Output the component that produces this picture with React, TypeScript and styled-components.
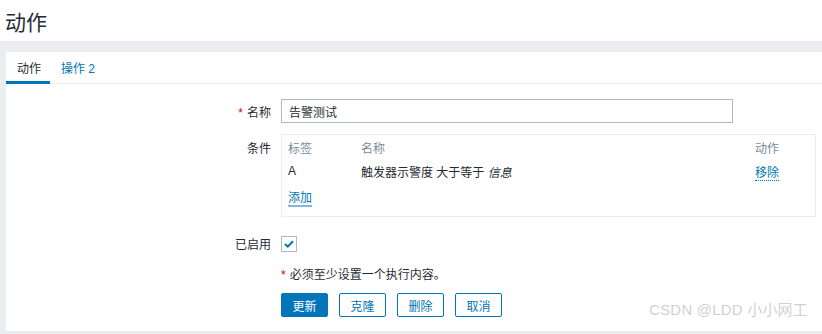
import React, { useState } from 'react';
import styled, { createGlobalStyle } from 'styled-components';

const colors = {
  text: '#1f2c33',
  muted: '#768d99',
  blue: '#0275b8',
  red: '#d40000',
  page: '#ebeef0',
  border: '#acbbc2',
  light: '#ebeef0',
};

const GlobalStyle = createGlobalStyle`
  html, body {
    margin: 0;
    padding: 0;
    background: #ffffff;
  }
  body {
    font-family: Arial, "Liberation Sans", "Noto Sans CJK SC", sans-serif;
    font-size: 12px;
    color: ${colors.text};
  }
  #root {
    height: 334px;
    overflow: hidden;
  }
`;

// Cabeçalho com o título da página
const Header = styled.header`
  height: 41px;
  padding-left: 5px;
  display: flex;
  align-items: center;
  background: #ffffff;
`;

const Title = styled.h1`
  margin: 0;
  font-size: 21px;
  font-weight: normal;
  color: ${colors.text};
`;

const Main = styled.main`
  background: ${colors.page};
  padding: 11px 0 3px 6px;
  position: relative;
`;

const Panel = styled.section`
  background: #ffffff;
  height: 279px;
  display: flex;
  flex-direction: column;
`;

const TabList = styled.nav`
  display: flex;
  height: 31px;
  border-bottom: 1px solid ${colors.light};
`;

const Tab = styled.a<{ $active?: boolean }>`
  display: flex;
  align-items: center;
  padding: 2px 9px 0 11px;
  margin-bottom: -1px;
  color: ${(p) => (p.$active ? colors.text : colors.blue)};
  border-bottom: 3px solid ${(p) => (p.$active ? colors.blue : 'transparent')};
  cursor: pointer;
`;

const Form = styled.div`
  padding-top: 15px;
  display: flex;
  flex-direction: column;
`;

const Row = styled.div<{ $gap?: number; $top?: boolean }>`
  display: grid;
  grid-template-columns: 265px 1fr;
  column-gap: 10px;
  align-items: ${(p) => (p.$top ? 'start' : 'center')};
  margin-bottom: ${(p) => p.$gap ?? 0}px;
  padding-right: 6px;
`;

const Label = styled.label<{ $pad?: number }>`
  text-align: right;
  padding-top: ${(p) => p.$pad ?? 0}px;
  color: ${colors.text};
`;

const Asterisk = styled.span`
  color: ${colors.red};
  margin-right: 4px;
`;

const TextInput = styled.input`
  box-sizing: border-box;
  width: 452px;
  height: 24px;
  padding: 0 7px;
  border: 1px solid ${colors.border};
  font-family: inherit;
  font-size: 12px;
  color: ${colors.text};
  outline: none;
  border-radius: 0;
`;

const ConditionBox = styled.div`
  border: 1px solid ${colors.light};
  padding: 0 6px 5px;
`;

const Table = styled.table`
  width: 100%;
  border-collapse: collapse;
`;

const Th = styled.th<{ $w?: number }>`
  text-align: left;
  font-weight: normal;
  color: ${colors.muted};
  height: 24px;
  padding: 0;
  width: ${(p) => (p.$w ? `${p.$w}px` : 'auto')};
`;

const Td = styled.td`
  height: 24px;
  padding: 0;
  color: ${colors.text};
`;

const RemoveLink = styled.a`
  color: ${colors.blue};
  border-bottom: 1px dotted ${colors.blue};
  cursor: pointer;
`;

const AddRow = styled.div`
  height: 24px;
  margin-top: 4px;
  display: flex;
  align-items: center;
`;

const AddLink = styled.a`
  color: ${colors.blue};
  border-bottom: 2px solid #82b9d9;
  line-height: 13px;
  cursor: pointer;
`;

const CheckBox = styled.span`
  box-sizing: border-box;
  width: 16px;
  height: 16px;
  border: 1px solid ${colors.border};
  display: flex;
  align-items: center;
  justify-content: center;
  background: #ffffff;
  cursor: pointer;
`;

const Note = styled.div`
  grid-column: 2;
  color: ${colors.text};
`;

const Buttons = styled.div`
  grid-column: 2;
  display: flex;
  gap: 11px;
`;

const Button = styled.button<{ $primary?: boolean }>`
  box-sizing: border-box;
  width: 47px;
  height: 24px;
  padding: 0;
  border-radius: 2px;
  border: 1px solid ${colors.blue};
  background: ${(p) => (p.$primary ? colors.blue : '#ffffff')};
  color: ${(p) => (p.$primary ? '#ffffff' : colors.blue)};
  font-family: inherit;
  font-size: 12px;
  cursor: pointer;
`;

const Watermark = styled.div`
  position: absolute;
  right: 14px;
  bottom: 15px;
  font-size: 15px;
  color: rgba(160, 160, 160, 0.5);
  letter-spacing: 0.2px;
  pointer-events: none;
`;

const App: React.FC = () => {
  const [name, setName] = useState<string>('告警测试');
  const [enabled, setEnabled] = useState<boolean>(true);

  return (
    <>
      <GlobalStyle />
      <Header>
        <Title>动作</Title>
      </Header>
      <Main>
        <Panel>
          <TabList>
            <Tab $active>动作</Tab>
            <Tab>操作 2</Tab>
          </TabList>
          <Form>
            <Row $gap={11}>
              <Label>
                <Asterisk>*</Asterisk>名称
              </Label>
              <TextInput value={name} onChange={(e) => setName(e.target.value)} />
            </Row>
            <Row $gap={18} $top>
              <Label $pad={5}>条件</Label>
              <ConditionBox>
                <Table>
                  <thead>
                    <tr>
                      <Th $w={73}>标签</Th>
                      <Th>名称</Th>
                      <Th $w={54}>动作</Th>
                    </tr>
                  </thead>
                  <tbody>
                    <tr>
                      <Td>A</Td>
                      <Td>
                        触发器示警度 大于等于 <i>信息</i>
                      </Td>
                      <Td>
                        <RemoveLink>移除</RemoveLink>
                      </Td>
                    </tr>
                  </tbody>
                </Table>
                <AddRow>
                  <AddLink>添加</AddLink>
                </AddRow>
              </ConditionBox>
            </Row>
            <Row $gap={13}>
              <Label>已启用</Label>
              <CheckBox onClick={() => setEnabled(!enabled)}>
                {enabled && (
                  <svg width="10" height="8" viewBox="0 0 10 8">
                    <path d="M1 4 L3.8 6.6 L9 1.2" fill="none" stroke={colors.blue} strokeWidth="2" />
                  </svg>
                )}
              </CheckBox>
            </Row>
            <Row $gap={11}>
              <Note>
                <Asterisk>*</Asterisk>必须至少设置一个执行内容。
              </Note>
            </Row>
            <Row>
              <Buttons>
                <Button $primary>更新</Button>
                <Button>克隆</Button>
                <Button>删除</Button>
                <Button>取消</Button>
              </Buttons>
            </Row>
          </Form>
        </Panel>
        <Watermark>CSDN @LDD 小小网工</Watermark>
      </Main>
    </>
  );
};

export default App;
